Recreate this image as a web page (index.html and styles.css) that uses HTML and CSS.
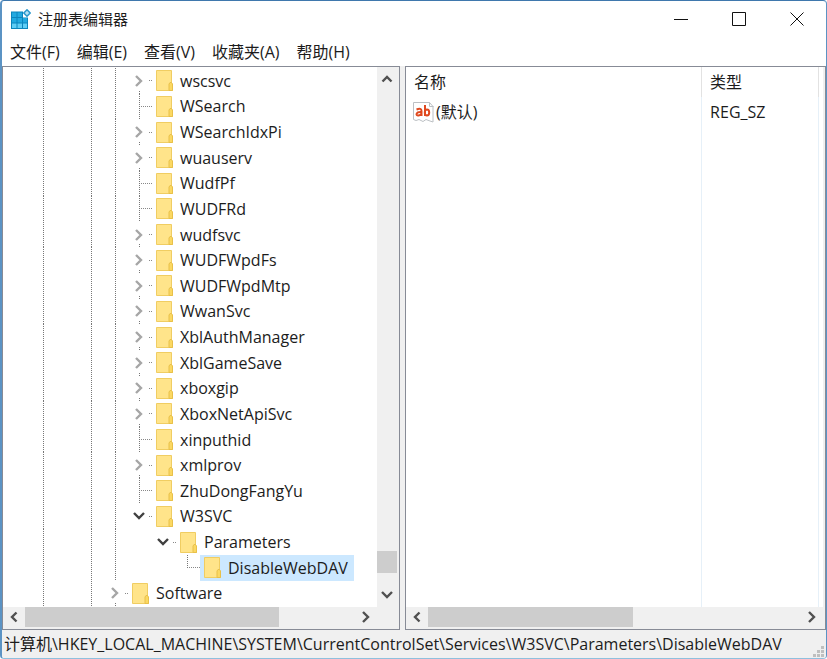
FILE: index.html
```html
<!DOCTYPE html>
<html lang="zh-CN">
<head>
<meta charset="utf-8">
<title>注册表编辑器</title>
<link rel="stylesheet" href="styles.css">
</head>
<body>
<svg class="defs" aria-hidden="true">
  <symbol id="folder" viewBox="0 0 17 21"><path d="M.5.5h15v13l1 1v6H.5z" fill="#ffe48a" stroke="#f0cd62"/><path d="M13 20.500v-6.500l1-1.500h1.500l1 1.500v6.500z" fill="#fbd862" stroke="#e8c04a"/></symbol>
  <symbol id="right" viewBox="0 0 10 12"><path d="M2 1l5 5-5 5" fill="none" stroke="currentColor" stroke-width="2.400"/></symbol>
  <symbol id="left" viewBox="0 0 10 12"><path d="M7.500 1.500L3 6l4.500 4.500" fill="none" stroke="currentColor" stroke-width="2.400"/></symbol>
  <symbol id="down" viewBox="0 0 12 10"><path d="M1 2l5 5 5-5" fill="none" stroke="currentColor" stroke-width="2.400"/></symbol>
  <symbol id="up" viewBox="0 0 12 10"><path d="M1.500 7.500L6 3l4.500 4.500" fill="none" stroke="currentColor" stroke-width="2.400"/></symbol>
</svg>
<div class="window">
  <header class="titlebar">
    <svg class="app-icon" viewBox="0 0 20 20" aria-hidden="true"><path d="M0 2.500h12v6h5V20H0z" fill="#0b85bd"/><path d="M1 3.500h4.500V8H1zM6.500 3.500H11V8H6.500zM1 9h4.500v4.500H1zM6.500 9H11v4.500H6.500zM12 9h4v4.500h-4z" fill="#22a9e0"/><path d="M1 14.500h4.500V19H1zM6.500 14.500H11V19H6.500zM12 14.500h4V19h-4z" fill="#5fcdf5"/><path d="M16 .8L19.200 4 16 7.200 12.800 4z" fill="#b5e2f5" stroke="#2a98cc" stroke-width="1.500"/></svg>
    <h1>注册表编辑器</h1>
    <div class="controls">
      <button aria-label="最小化"><svg viewBox="0 0 14 14"><path d="M0 7.500h14"/></svg></button>
      <button aria-label="最大化"><svg viewBox="0 0 14 14"><path d="M.5.5h13v13H.5z"/></svg></button>
      <button aria-label="关闭"><svg viewBox="0 0 14 14"><path d="M.5.5l13 13M13.500.5l-13 13"/></svg></button>
    </div>
  </header>
  <nav class="menu">
    <button>文件(F)</button><button>编辑(E)</button><button>查看(V)</button><button>收藏夹(A)</button><button>帮助(H)</button>
  </nav>
  <main class="panes">
    <section class="pane tree-pane">
      <div class="tree-body">
        <ul class="tree">
          <li><i class="g"></i><i></i><i class="g"></i><i class="g"></i><b class="node"><svg><use href="#right"/></svg></b><span class="label"><svg><use href="#folder"/></svg>wscsvc</span></li>
          <li><i class="g"></i><i></i><i class="g"></i><i class="g"></i><b class="leaf"></b><span class="label"><svg><use href="#folder"/></svg>WSearch</span></li>
          <li><i class="g"></i><i></i><i class="g"></i><i class="g"></i><b class="node"><svg><use href="#right"/></svg></b><span class="label"><svg><use href="#folder"/></svg>WSearchIdxPi</span></li>
          <li><i class="g"></i><i></i><i class="g"></i><i class="g"></i><b class="node"><svg><use href="#right"/></svg></b><span class="label"><svg><use href="#folder"/></svg>wuauserv</span></li>
          <li><i class="g"></i><i></i><i class="g"></i><i class="g"></i><b class="leaf"></b><span class="label"><svg><use href="#folder"/></svg>WudfPf</span></li>
          <li><i class="g"></i><i></i><i class="g"></i><i class="g"></i><b class="leaf"></b><span class="label"><svg><use href="#folder"/></svg>WUDFRd</span></li>
          <li><i class="g"></i><i></i><i class="g"></i><i class="g"></i><b class="node"><svg><use href="#right"/></svg></b><span class="label"><svg><use href="#folder"/></svg>wudfsvc</span></li>
          <li><i class="g"></i><i></i><i class="g"></i><i class="g"></i><b class="node"><svg><use href="#right"/></svg></b><span class="label"><svg><use href="#folder"/></svg>WUDFWpdFs</span></li>
          <li><i class="g"></i><i></i><i class="g"></i><i class="g"></i><b class="node"><svg><use href="#right"/></svg></b><span class="label"><svg><use href="#folder"/></svg>WUDFWpdMtp</span></li>
          <li><i class="g"></i><i></i><i class="g"></i><i class="g"></i><b class="node"><svg><use href="#right"/></svg></b><span class="label"><svg><use href="#folder"/></svg>WwanSvc</span></li>
          <li><i class="g"></i><i></i><i class="g"></i><i class="g"></i><b class="node"><svg><use href="#right"/></svg></b><span class="label"><svg><use href="#folder"/></svg>XblAuthManager</span></li>
          <li><i class="g"></i><i></i><i class="g"></i><i class="g"></i><b class="node"><svg><use href="#right"/></svg></b><span class="label"><svg><use href="#folder"/></svg>XblGameSave</span></li>
          <li><i class="g"></i><i></i><i class="g"></i><i class="g"></i><b class="node"><svg><use href="#right"/></svg></b><span class="label"><svg><use href="#folder"/></svg>xboxgip</span></li>
          <li><i class="g"></i><i></i><i class="g"></i><i class="g"></i><b class="node"><svg><use href="#right"/></svg></b><span class="label"><svg><use href="#folder"/></svg>XboxNetApiSvc</span></li>
          <li><i class="g"></i><i></i><i class="g"></i><i class="g"></i><b class="leaf"></b><span class="label"><svg><use href="#folder"/></svg>xinputhid</span></li>
          <li><i class="g"></i><i></i><i class="g"></i><i class="g"></i><b class="node"><svg><use href="#right"/></svg></b><span class="label"><svg><use href="#folder"/></svg>xmlprov</span></li>
          <li><i class="g"></i><i></i><i class="g"></i><i class="g"></i><b class="leaf"></b><span class="label"><svg><use href="#folder"/></svg>ZhuDongFangYu</span></li>
          <li><i class="g"></i><i></i><i class="g"></i><i class="g"></i><b class="node open"><svg><use href="#down"/></svg></b><span class="label"><svg><use href="#folder"/></svg>W3SVC</span></li>
          <li><i class="g"></i><i></i><i class="g"></i><i class="g"></i><i></i><b class="node open"><svg><use href="#down"/></svg></b><span class="label"><svg><use href="#folder"/></svg>Parameters</span></li>
          <li><i class="g"></i><i></i><i class="g"></i><i class="g"></i><i></i><i></i><b class="leaf end"></b><span class="label selected"><svg><use href="#folder"/></svg>DisableWebDAV</span></li>
          <li><i class="g"></i><i></i><i class="g"></i><b class="node"><svg><use href="#right"/></svg></b><span class="label"><svg><use href="#folder"/></svg>Software</span></li>
        </ul>
        <div class="vscroll">
          <button aria-label="向上滚动"><svg><use href="#up"/></svg></button>
          <div class="vtrack"><div class="vthumb"></div></div>
          <button aria-label="向下滚动"><svg><use href="#down"/></svg></button>
        </div>
      </div>
      <div class="hscroll with-corner">
        <button aria-label="向左滚动"><svg><use href="#left"/></svg></button>
        <div class="htrack"><div class="hthumb tree-thumb"></div></div>
        <button aria-label="向右滚动"><svg><use href="#right"/></svg></button>
      </div>
    </section>
    <section class="pane value-pane">
      <div class="values">
        <table>
          <colgroup><col class="col-name"><col></colgroup>
          <thead><tr><th>名称</th><th>类型</th></tr></thead>
          <tbody>
            <tr><td><span class="value"><svg class="string-icon" viewBox="0 0 21 21" aria-hidden="true"><path d="M.5.5h16l3.500 4V20l-3-1-4-1.500-3 2-4-2-3 1-2.500-1z" fill="#fff" stroke="#bcc0c4"/><path d="M16.500.5v4h4" fill="none" stroke="#bcc0c4"/><g fill="none" stroke="#e0491f" stroke-width="2"><path d="M3.500 7.500q5-2 5 1.500v5M8.500 10c-6-.5-6 4-3 3.500q3-.5 3-2.500"/><path d="M12 3v11"/><ellipse cx="14" cy="10.500" rx="2.200" ry="3"/></g></svg>(默认)</span></td><td>REG_SZ</td></tr>
            <tr class="rest"><td></td><td></td></tr>
          </tbody>
        </table>
      </div>
      <div class="hscroll">
        <button aria-label="向左滚动"><svg><use href="#left"/></svg></button>
        <div class="htrack"><div class="hthumb value-thumb"></div></div>
        <button aria-label="向右滚动"><svg><use href="#right"/></svg></button>
      </div>
    </section>
  </main>
  <footer class="status"><span>计算机\HKEY_LOCAL_MACHINE\SYSTEM\CurrentControlSet\Services\W3SVC\Parameters\DisableWebDAV</span>
    <svg class="grip" viewBox="0 0 12 12" aria-hidden="true"><path d="M8 0h3v3H8zM4 4h3v3H4zM8 4h3v3H8zM0 8h3v3H0zM4 8h3v3H4zM8 8h3v3H8z" fill="#bfbfbf"/></svg>
  </footer>
</div>
</body>
</html>
```
FILE: styles.css
```css
* { box-sizing: border-box; }
body {
  margin: 0;
  color: #1c1c1c;
  font: 16px/20px "Open Sans", "Noto Sans CJK SC", sans-serif;
}
button {
  display: flex;
  align-items: center;
  justify-content: center;
  padding: 0;
  border: 0;
  background: none;
  color: inherit;
  font: inherit;
}
.defs { display: none; }
.window {
  display: flex;
  flex-direction: column;
  height: 100vh;
  border: 1px solid #5b93c4;
  border-top-color: #3f78ad;
  border-left-width: 2px;
  border-bottom-color: #8fc0de;
  border-radius: 4px;
  overflow: hidden;
  background: #fff;
}
.titlebar {
  display: flex;
  align-items: center;
  height: 36px;
  padding-left: 9px;
}
.app-icon { width: 20px; height: 20px; }
h1 {
  margin: 0 auto 0 7px;
  font: inherit;
  font-size: 15px;
}
.controls { display: flex; }
.controls button { width: 58px; height: 36px; }
.controls svg {
  width: 14px;
  height: 14px;
  fill: none;
  stroke: #111;
  stroke-width: 1;
}
.menu {
  display: flex;
  gap: 17px;
  height: 29px;
  padding-left: 8px;
}
.panes {
  display: flex;
  gap: 5px;
  flex: 1;
  min-height: 0;
  background: #f0f0f0;
}
.pane {
  display: flex;
  flex-direction: column;
  min-width: 0;
  padding: 0 2px 2px 0;
  border: 1px solid #878b96;
  background: #f0f0f0;
}
.tree-pane { flex: 398 1 0; }
.value-pane { flex: 421 1 0; }
.tree-body {
  display: flex;
  flex: 1;
  min-height: 0;
}
.tree {
  display: flex;
  flex: 1;
  flex-direction: column;
  margin: 0;
  padding: 1px 0 1px 28px;
  list-style: none;
  overflow: hidden;
  background: #fff;
}
.tree li {
  display: flex;
  flex: 1;
  min-height: 0;
}
.tree i { flex: 0 0 24px; }
.tree b { flex: 0 0 25px; }
.g { background: repeating-linear-gradient(#777 0 1px, transparent 1px 2px) 12px 0 / 1px 100% no-repeat; }
.leaf, .node {
  display: flex;
  align-items: center;
  justify-content: center;
}
.leaf {
  background:
    repeating-linear-gradient(#777 0 1px, transparent 1px 2px) 12px 0 / 1px 100% no-repeat,
    repeating-linear-gradient(90deg, #888 0 1px, transparent 1px 2px) 12px 50% / 13px 1px no-repeat;
}
.leaf.end { background-size: 1px 50%, 13px 1px; }
.node {
  padding-right: 2px;
  color: #a6a6a6;
  background:
    repeating-linear-gradient(#777 0 1px, transparent 1px 2px) 12px 100% / 1px 3px no-repeat,
    repeating-linear-gradient(90deg, #888 0 1px, transparent 1px 2px) 22px 50% / 3px 1px no-repeat;
}
.node.open {
  color: #404040;
  background: repeating-linear-gradient(90deg, #888 0 1px, transparent 1px 2px) 22px 50% / 3px 1px no-repeat;
}
.node svg { width: 10px; height: 12px; }
.node.open svg { width: 12px; height: 10px; }
.label {
  display: flex;
  align-items: center;
  gap: 7px;
  padding: 0 6px 0 4px;
  white-space: nowrap;
}
.label svg { width: 17px; height: 21px; }
.selected { background: #cce8ff; }
.vscroll {
  display: flex;
  flex-direction: column;
  width: 20px;
  color: #505050;
}
.vscroll button { height: 24px; }
.vscroll svg { width: 12px; height: 10px; }
.vtrack {
  display: flex;
  flex: 1;
  flex-direction: column;
  justify-content: flex-end;
  padding-bottom: 10px;
}
.vthumb { height: 22px; background: #cdcdcd; }
.hscroll {
  display: flex;
  height: 20px;
  color: #505050;
}
.with-corner { padding-right: 20px; }
.hscroll button { width: 22px; }
.hscroll svg { width: 10px; height: 12px; }
.htrack { display: flex; flex: 1; }
.hthumb { background: #cdcdcd; }
.tree-thumb { width: 77%; }
.value-thumb { width: 55%; }
.values {
  flex: 1;
  min-height: 0;
  padding-right: 4px;
  background: #fff;
}
table {
  width: 100%;
  height: 100%;
  border-collapse: separate;
  border-spacing: 0;
  table-layout: fixed;
}
.col-name { width: 296px; }
th, td {
  height: 30px;
  padding: 0 8px;
  border-right: 1px solid #e6f0f8;
  font-weight: normal;
  text-align: left;
}
th { border-right-color: #e2e2e2; }
td:first-child { padding-left: 7px; }
.rest td { height: auto; }
.value { display: flex; align-items: center; gap: 2px; }
.string-icon { width: 21px; height: 21px; }
.status {
  display: flex;
  align-items: center;
  justify-content: space-between;
  height: 28px;
  padding: 0 1px 0 2px;
  background: #f0f0f0;
  white-space: nowrap;
}
.grip { flex: none; align-self: flex-end; width: 12px; height: 12px; }
```
